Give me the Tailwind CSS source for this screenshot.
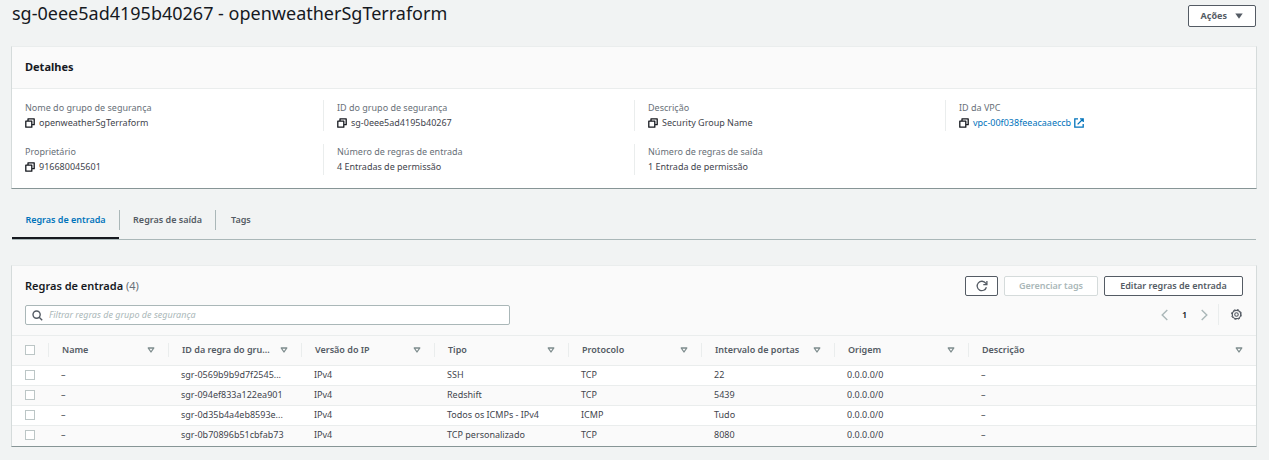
<!DOCTYPE html>
<html lang="pt-BR">
<head>
<meta charset="utf-8">
<meta name="viewport" content="width=device-width, initial-scale=1">
<title>openweatherSgTerraform</title>
<script src="https://cdn.jsdelivr.net/npm/@tailwindcss/browser@4"></script>
</head>
<body class="min-h-screen bg-[#f1f3f3] pl-[11px] pr-3 font-['Noto_Sans','Open_Sans',sans-serif] text-[9px] leading-4 text-[#3f454d]">
<svg class="hidden" aria-hidden="true">
  <symbol id="copy" viewBox="0 0 10 10"><path d="M3 2.5V.8h6.2v5.9H7.5M.8 3.2h6v6h-6z" fill="none" stroke="#16191f" stroke-width="1.3" stroke-linejoin="round"/></symbol>
  <symbol id="sort" viewBox="0 0 8 6"><path d="M1.2 1h5.6L4 5z" fill="none" stroke="#7d8c8d" stroke-width="1.3" stroke-linejoin="round"/></symbol>
</svg>

<header class="flex h-[46px] items-start justify-between">
  <h1 class="pl-px text-[18px] leading-[26px] text-[#16191f]">sg-0eee5ad4195b40267 - openweatherSgTerraform</h1>
  <button class="mt-[5px] mr-px flex h-[22px] items-center gap-2 rounded-xs border border-[#545b64] bg-white px-3 font-bold text-[#545b64]">Ações
    <svg class="h-[6px] w-2" viewBox="0 0 8 6"><path d="M.3.5h7.4L4 5.8z" fill="#545b64"/></svg>
  </button>
</header>

<main>
<section class="border border-t-[#eaeded] border-x-[#d5dbdb] border-b-[#879596] bg-white">
  <h2 class="border-b border-[#eaeded] bg-[#fafafa] px-[13px] pt-2 pb-[9px] text-[11px] leading-6 font-bold text-[#16191f]">Detalhes</h2>
  <dl class="grid grid-cols-4 gap-y-[13px] pt-[11px] pb-[13px]">
    <div class="pl-[13px]">
      <dt class="leading-[15px] text-[#687078]">Nome do grupo de segurança</dt>
      <dd class="flex items-center gap-1"><button aria-label="Copiar nome"><svg class="size-[10px]"><use href="#copy"/></svg></button>openweatherSgTerraform</dd>
    </div>
    <div class="border-l border-[#eaeded] pl-[13px]">
      <dt class="leading-[15px] text-[#687078]">ID do grupo de segurança</dt>
      <dd class="flex items-center gap-1"><button aria-label="Copiar ID"><svg class="size-[10px]"><use href="#copy"/></svg></button>sg-0eee5ad4195b40267</dd>
    </div>
    <div class="border-l border-[#eaeded] pl-[13px]">
      <dt class="leading-[15px] text-[#687078]">Descrição</dt>
      <dd class="flex items-center gap-1"><button aria-label="Copiar descrição"><svg class="size-[10px]"><use href="#copy"/></svg></button>Security Group Name</dd>
    </div>
    <div class="border-l border-[#eaeded] pl-[13px]">
      <dt class="leading-[15px] text-[#687078]">ID da VPC</dt>
      <dd class="flex items-center gap-1"><button aria-label="Copiar ID da VPC"><svg class="size-[10px]"><use href="#copy"/></svg></button><a href="#vpc" class="flex items-center gap-[3px] text-[#0073bb]">vpc-00f038feeacaaeccb
        <svg class="size-[10px]" viewBox="0 0 10 10" fill="none" stroke="#0073bb" stroke-width="1.3"><path d="M4 .8H.8v8.4h8.4V6M6 .8h3.2V4M9 1 3.6 6.4"/></svg></a></dd>
    </div>
    <div class="pl-[13px]">
      <dt class="leading-[15px] text-[#687078]">Proprietário</dt>
      <dd class="flex items-center gap-1"><button aria-label="Copiar proprietário"><svg class="size-[10px]"><use href="#copy"/></svg></button>916680045601</dd>
    </div>
    <div class="border-l border-[#eaeded] pl-[13px]">
      <dt class="leading-[15px] text-[#687078]">Número de regras de entrada</dt>
      <dd>4 Entradas de permissão</dd>
    </div>
    <div class="border-l border-[#eaeded] pl-[13px]">
      <dt class="leading-[15px] text-[#687078]">Número de regras de saída</dt>
      <dd>1 Entrada de permissão</dd>
    </div>
  </dl>
</section>

<nav class="mt-[21px] mr-px ml-px flex border-b border-[#aab7b8] font-semibold text-[#545b64]">
  <a href="#entrada" class="flex h-[29px] w-[107px] justify-center border-b-2 border-[#16191f] text-[#0073bb]"><span class="leading-5">Regras de entrada</span></a>
  <a href="#saida" class="flex h-5 w-[97px] items-center justify-center border-x border-[#aab7b8]">Regras de saída</a>
  <a href="#tags" class="flex h-5 items-center px-[15px]">Tags</a>
</nav>

<section class="mt-[25px] border border-t-[#eaeded] border-x-[#d5dbdb] border-b-[#879596] bg-[#fafafa]">
  <div class="flex items-center justify-between px-[13px] pt-[10px]">
    <h2 class="text-[11px] leading-5 font-semibold text-[#16191f]">Regras de entrada <span class="font-normal text-[#687078]">(4)</span></h2>
    <div class="flex h-5 gap-[6px] font-semibold text-[#545b64]">
      <button aria-label="Atualizar" class="flex w-[33px] items-center justify-center rounded-xs border border-[#545b64] bg-white">
        <svg class="size-3" viewBox="0 0 12 12" fill="none" stroke="#545b64" stroke-width="1.3"><path d="M10.4 7.2A4.7 4.7 0 1 1 9.7 3.2L10.8 4.4M10.9 1v3.6H7.3"/></svg>
      </button>
      <button disabled class="w-[94px] rounded-xs border border-[#d5dbdb] bg-white leading-4 text-[#aab7b8]">Gerenciar tags</button>
      <button class="w-[139px] rounded-xs border border-[#545b64] bg-white leading-4">Editar regras de entrada</button>
    </div>
  </div>
  <div class="flex h-[39px] items-start justify-between px-[13px] pt-2">
    <label class="mt-px flex h-5 w-full max-w-[485px] items-center gap-[6px] rounded-xs border border-[#aab7b8] bg-white px-[6px]">
      <svg class="size-[11px]" viewBox="0 0 11 11" fill="none" stroke="#545b64" stroke-width="1.4"><circle cx="4.6" cy="4.6" r="3.6"/><path d="m7.2 7.2 3 3"/></svg>
      <input type="text" aria-label="Filtrar regras" placeholder="Filtrar regras de grupo de segurança" class="min-w-0 flex-1 outline-none placeholder:text-[#aab7b8] placeholder:italic">
    </label>
    <div class="flex h-[21px] items-center text-[#16191f]">
      <button aria-label="Página anterior"><svg class="h-3 w-[7px]" viewBox="0 0 7 12" fill="none" stroke="#aab7b8" stroke-width="1.4"><path d="M6.3 1 1.2 6l5.1 5"/></svg></button>
      <button class="w-[33px] text-center font-semibold">1</button>
      <button aria-label="Próxima página"><svg class="h-3 w-[7px]" viewBox="0 0 7 12" fill="none" stroke="#aab7b8" stroke-width="1.4"><path d="m.7 1 5.1 5-5.1 5"/></svg></button>
      <button aria-label="Preferências" class="ml-[10px] flex h-full items-center border-l border-[#eaeded] pr-px pl-3"><svg class="size-[11px]" viewBox="0 0 12 12" fill="none" stroke="#545b64"><circle cx="6" cy="6" r="4.6" stroke-width="1.3"/><circle cx="6" cy="6" r="5.5" stroke-width="1" stroke-dasharray="2.3 2.02"/><circle cx="6" cy="6" r="1.9" stroke-width="1.2"/></svg></button>
    </div>
  </div>
  <table class="w-full table-fixed border-collapse text-left">
    <colgroup><col class="w-[36px]"><col class="w-[120px]"><col class="w-[133px]"><col class="w-[133px]"><col class="w-[134px]"><col class="w-[133px]"><col class="w-[133px]"><col class="w-[134px]"><col></colgroup>
    <thead class="border-y border-[#eaeded] text-[#545b64] [&_th]:p-0 [&_th]:pb-px [&_th]:font-semibold">
      <tr class="h-[30px]">
        <th><input type="checkbox" aria-label="Selecionar tudo" class="ml-[13px] block size-[10px] appearance-none border border-[#bcc6c6] bg-white"></th>
        <th><div class="flex h-[14px] items-center justify-between border-l border-[#eaeded] px-[13px]">Name<svg class="h-[6px] w-2 shrink-0"><use href="#sort"/></svg></div></th>
        <th><div class="flex h-[14px] items-center justify-between border-l border-[#eaeded] px-[13px]">ID da regra do gru...<svg class="h-[6px] w-2 shrink-0"><use href="#sort"/></svg></div></th>
        <th><div class="flex h-[14px] items-center justify-between border-l border-[#eaeded] px-[13px]">Versão do IP<svg class="h-[6px] w-2 shrink-0"><use href="#sort"/></svg></div></th>
        <th><div class="flex h-[14px] items-center justify-between border-l border-[#eaeded] px-[13px]">Tipo<svg class="h-[6px] w-2 shrink-0"><use href="#sort"/></svg></div></th>
        <th><div class="flex h-[14px] items-center justify-between border-l border-[#eaeded] px-[13px]">Protocolo<svg class="h-[6px] w-2 shrink-0"><use href="#sort"/></svg></div></th>
        <th><div class="flex h-[14px] items-center justify-between border-l border-[#eaeded] px-[13px]">Intervalo de portas<svg class="h-[6px] w-2 shrink-0"><use href="#sort"/></svg></div></th>
        <th><div class="flex h-[14px] items-center justify-between border-l border-[#eaeded] px-[13px]">Origem<svg class="h-[6px] w-2 shrink-0"><use href="#sort"/></svg></div></th>
        <th><div class="flex h-[14px] items-center justify-between border-l border-[#eaeded] px-[13px]">Descrição<svg class="h-[6px] w-2 shrink-0"><use href="#sort"/></svg></div></th>
      </tr>
    </thead>
    <tbody class="divide-y divide-[#eaeded] [&_td]:p-0 [&_td]:pb-px [&_td]:pl-[13px] [&_tr]:h-5">
      <tr class="bg-white"><td><input type="checkbox" aria-label="Selecionar SSH" class="block size-[10px] appearance-none border border-[#bcc6c6] bg-white"></td><td>–</td><td>sgr-0569b9b9d7f2545...</td><td>IPv4</td><td>SSH</td><td>TCP</td><td>22</td><td>0.0.0.0/0</td><td>–</td></tr>
      <tr><td><input type="checkbox" aria-label="Selecionar Redshift" class="block size-[10px] appearance-none border border-[#bcc6c6] bg-white"></td><td>–</td><td>sgr-094ef833a122ea901</td><td>IPv4</td><td>Redshift</td><td>TCP</td><td>5439</td><td>0.0.0.0/0</td><td>–</td></tr>
      <tr class="bg-white"><td><input type="checkbox" aria-label="Selecionar ICMP" class="block size-[10px] appearance-none border border-[#bcc6c6] bg-white"></td><td>–</td><td>sgr-0d35b4a4eb8593e...</td><td>IPv4</td><td>Todos os ICMPs - IPv4</td><td>ICMP</td><td>Tudo</td><td>0.0.0.0/0</td><td>–</td></tr>
      <tr><td><input type="checkbox" aria-label="Selecionar TCP personalizado" class="block size-[10px] appearance-none border border-[#bcc6c6] bg-white"></td><td>–</td><td>sgr-0b70896b51cbfab73</td><td>IPv4</td><td>TCP personalizado</td><td>TCP</td><td>8080</td><td>0.0.0.0/0</td><td>–</td></tr>
    </tbody>
  </table>
</section>
</main>
</body>
</html>
